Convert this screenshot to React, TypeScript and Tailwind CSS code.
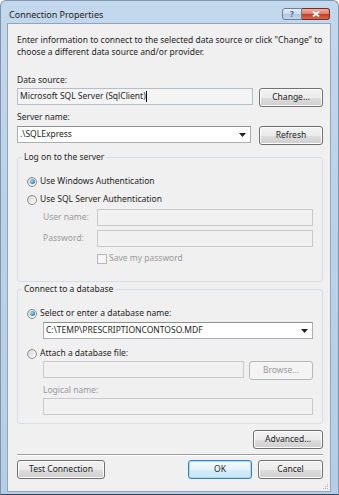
import React from 'react'

const font = { fontFamily: '"Noto Sans", "Open Sans", sans-serif' }

function Btn({ children, w, primary = false, disabled = false }: { children: React.ReactNode; w: string; primary?: boolean; disabled?: boolean }) {
  return (
    <div
      className={`${w} h-[19px] shrink-0 flex items-center justify-center rounded-[3px] border text-[8.5px] ${
        primary
          ? 'border-[#3c7fb1] bg-[linear-gradient(#f3f9fd_0%,#e6f3fb_50%,#d6ecf9_51%,#c9e6f7_100%)] shadow-[inset_0_0_0_1px_#a6dcf3]'
          : disabled
          ? 'border-[#b5b9bc] bg-[#f4f4f4] text-[#9a9a9a]'
          : 'border-[#707070] bg-[linear-gradient(#f2f2f2_0%,#ebebeb_50%,#dddddd_51%,#cfcfcf_100%)] shadow-[inset_0_0_0_1px_#fcfcfc]'
      }`}
    >
      {children}
    </div>
  )
}

function Radio({ checked }: { checked?: boolean }) {
  return (
    <div className="w-[10px] h-[10px] rounded-full border border-[#8d8d8d] bg-[linear-gradient(135deg,#d4d4d4,#ffffff)] flex items-center justify-center shrink-0">
      {checked && <div className="w-[5px] h-[5px] rounded-full bg-[radial-gradient(circle_at_35%_35%,#9be0ff,#1a5a92)]" />}
    </div>
  )
}

function Field({ w, disabled = false, combo = false, text = '' }: { w: string; disabled?: boolean; combo?: boolean; text?: string }) {
  return (
    <div
      className={`${w} h-[17px] shrink-0 flex items-center border text-[8.5px] px-[2px] ${
        disabled ? 'border-[#c9c9c9] bg-[#f1f1f1]' : 'border-[#abadb3] border-t-[#8e8f8f] bg-white'
      }`}
    >
      <span className="flex-1 truncate">{text}</span>
      {combo && (
        <svg width="7" height="4" viewBox="0 0 7 4" className="mr-[2px]">
          <path d="M0 0h7L3.5 4z" fill="#222" />
        </svg>
      )}
    </div>
  )
}

function Group({ title, className, children }: { title: string; className: string; children: React.ReactNode }) {
  return (
    <fieldset className={`border border-[#d5dfe5] rounded-[3px] pl-[9px] ${className}`}>
      <legend className="ml-[-5px] px-[2px] h-[12px] leading-[12px] text-[8.5px] text-[#1e1e1e]">{title}</legend>
      {children}
    </fieldset>
  )
}

export default function App() {
  return (
    <div style={font} className="w-[339px] h-[495px] bg-[linear-gradient(#c3d7ed,#bcd2ea_40%,#b6cde7)] border border-[#7f94ad] border-b-[#34455a] rounded-t-[6px] flex flex-col text-[#1e1e1e] overflow-hidden">
      {/* title bar */}
      <div className="h-[22px] shrink-0 flex items-start pl-[8px] pr-[8px]">
        <span className="text-[9px] leading-[12px] mt-[8px] flex-1">Connection Properties</span>
        <div className="flex mt-[7px]">
          <div className="w-[20px] h-[12px] rounded-l-[3px] border border-[#6d7f96] bg-[linear-gradient(#e4edf7_0%,#cbd9ea_50%,#b3c6dd_51%,#c5d5e8_100%)] flex items-center justify-center text-[8px] leading-none font-bold text-[#53657d]">?</div>
          <div className="w-[28px] h-[12px] rounded-r-[3px] border border-l-0 border-[#6c2e26] bg-[linear-gradient(#eeb0a4_0%,#dc7c68_50%,#c63b22_51%,#d9664c_100%)] flex items-center justify-center">
            <svg width="8" height="6" viewBox="0 0 8 6">
              <path d="M1 0.5L7 5.5M7 0.5L1 5.5" stroke="white" strokeWidth="1.8" />
            </svg>
          </div>
        </div>
      </div>

      {/* client */}
      <div className="relative flex-1 ml-[6px] mr-[7px] mb-[2px] bg-[#f0f0f0] border border-[#8fa5be] flex flex-col pl-[9px] pr-[7px] pt-[10px]">
        <p className="text-[8.5px] leading-[12px]">
          Enter information to connect to the selected data source or click "Change" to choose a different data source and/or provider.
        </p>

        <div className="mt-[16px] text-[8.5px] leading-[12px]">Data source:</div>
        <div className="mt-[2px] flex items-start justify-between">
          <div className="w-[236px] h-[17px] flex items-center border border-[#b5bfca] bg-[#f4f4f4] text-[8.5px] px-[2px]">
            Microsoft SQL Server (SqlClient)<span className="w-px h-[11px] bg-black" />
          </div>
          <Btn w="w-[64px]">Change...</Btn>
        </div>

        <div className="mt-[4px] text-[8.5px] leading-[12px]">Server name:</div>
        <div className="mt-[3px] flex items-start justify-between">
          <Field w="w-[234px]" combo text=".\SQLExpress" />
          <Btn w="w-[64px]">Refresh</Btn>
        </div>

        <Group title="Log on to the server" className="mt-[6px] pb-[17px]">
          <div className="flex flex-col text-[8.5px]">
            <div className="mt-[12px] h-[13px] flex items-center gap-[3px]">
              <Radio checked />
              <span>Use Windows Authentication</span>
            </div>
            <div className="mt-[5px] h-[13px] flex items-center gap-[3px]">
              <Radio />
              <span>Use SQL Server Authentication</span>
            </div>
            <div className="mt-[3px] flex items-center">
              <span className="w-[70px] pl-[16px] text-[#9a9a9a]">User name:</span>
              <Field w="w-[216px]" disabled />
            </div>
            <div className="mt-[4px] flex items-center">
              <span className="w-[70px] pl-[16px] text-[#9a9a9a]">Password:</span>
              <Field w="w-[216px]" disabled />
            </div>
            <div className="mt-[6px] ml-[70px] h-[11px] flex items-center gap-[2px] text-[#9a9a9a]">
              <div className="w-[10px] h-[10px] border border-[#b8b8b8] bg-[#f6f6f6]" />
              <span>Save my password</span>
            </div>
          </div>
        </Group>

        <Group title="Connect to a database" className="mt-[1px] pb-[8px]">
          <div className="flex flex-col text-[8.5px]">
            <div className="mt-[12px] h-[13px] flex items-center gap-[3px]">
              <Radio checked />
              <span>Select or enter a database name:</span>
            </div>
            <div className="mt-[2px] ml-[16px]">
              <Field w="w-[270px]" combo text="C:\TEMP\PRESCRIPTIONCONTOSO.MDF" />
            </div>
            <div className="mt-[8px] h-[13px] flex items-center gap-[3px]">
              <Radio />
              <span>Attach a database file:</span>
            </div>
            <div className="mt-[1px] ml-[16px] flex items-start gap-[5px]">
              <Field w="w-[201px]" disabled />
              <Btn w="w-[64px]" disabled>Browse...</Btn>
            </div>
            <div className="mt-[4px] ml-[16px] text-[#9a9a9a] leading-[12px]">Logical name:</div>
            <div className="mt-[2px] ml-[16px]">
              <Field w="w-[270px]" disabled />
            </div>
          </div>
        </Group>

        <div className="mt-[6px] flex justify-end">
          <Btn w="w-[70px]">Advanced...</Btn>
        </div>

        <div className="mt-[5px] border-t border-[#a0a0a0] border-b border-b-white" />

        <div className="mt-[4px] flex items-start">
          <Btn w="w-[88px]">Test Connection</Btn>
          <div className="flex-1" />
          <Btn w="w-[64px]" primary>OK</Btn>
          <div className="w-[6px]" />
          <Btn w="w-[65px]">Cancel</Btn>
        </div>

        {/* size grip */}
        <svg width="7" height="7" viewBox="0 0 7 7" className="absolute right-[1px] bottom-[1px]">
          <rect x="5" y="1" width="1" height="1" fill="#b0b0b0" />
          <rect x="3" y="3" width="1" height="1" fill="#b0b0b0" />
          <rect x="5" y="3" width="1" height="1" fill="#b0b0b0" />
          <rect x="1" y="5" width="1" height="1" fill="#b0b0b0" />
          <rect x="3" y="5" width="1" height="1" fill="#b0b0b0" />
          <rect x="5" y="5" width="1" height="1" fill="#b0b0b0" />
        </svg>
      </div>
    </div>
  )
}
